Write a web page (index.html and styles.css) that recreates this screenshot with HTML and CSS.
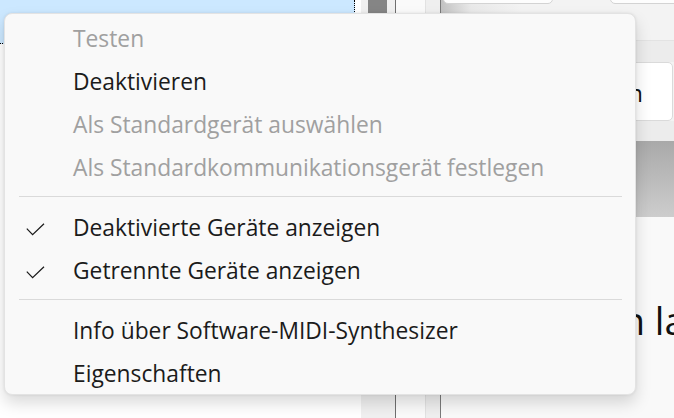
FILE: index.html
```html
<!DOCTYPE html>
<html lang="de">
<head>
<meta charset="utf-8">
<title>Kontextmenü</title>
<link rel="stylesheet" href="styles.css">
</head>
<body>
<div class="bg">
  <div class="files">
    <div class="row-sel"></div>
  </div>
  <div class="scroll"><div class="thumb"></div></div>
  <div class="gap1"></div>
  <div class="gap2"></div>
  <div class="preview">
    <div class="tools"><div class="tb tb1"></div><div class="tb tb2"></div></div>
    <div class="band"></div>
    <div class="box"><span class="cut">Öffnen</span></div>
    <div class="band2"></div>
    <div class="grad"></div>
    <div class="msg"><span class="cut2">Dateien</span><span class="rest">&nbsp;la</span></div>
  </div>
</div>

<div class="menu">
  <div class="item disabled"><span class="chk"></span><span class="lbl">Testen</span></div>
  <div class="item"><span class="chk"></span><span class="lbl">Deaktivieren</span></div>
  <div class="item disabled"><span class="chk"></span><span class="lbl">Als Standardgerät auswählen</span></div>
  <div class="item disabled"><span class="chk"></span><span class="lbl">Als Standardkommunikationsgerät festlegen</span></div>
  <div class="sep"></div>
  <div class="item"><span class="chk"><svg width="19" height="13" viewBox="0 0 19 13"><path d="M0.8 5.6 L6.6 11.6 L18 0.8" fill="none" stroke="#1b1b1b" stroke-width="1.25"/></svg></span><span class="lbl">Deaktivierte Geräte anzeigen</span></div>
  <div class="item"><span class="chk"><svg width="19" height="13" viewBox="0 0 19 13"><path d="M0.8 5.6 L6.6 11.6 L18 0.8" fill="none" stroke="#1b1b1b" stroke-width="1.25"/></svg></span><span class="lbl">Getrennte Geräte anzeigen</span></div>
  <div class="sep"></div>
  <div class="item"><span class="chk"></span><span class="lbl">Info über Software-MIDI-Synthesizer</span></div>
  <div class="item"><span class="chk"></span><span class="lbl">Eigenschaften</span></div>
</div>
</body>
</html>
```

FILE: styles.css
```css
* { box-sizing: border-box; }
html, body {
  margin: 0;
  padding: 0;
  width: 674px;
  height: 418px;
  overflow: hidden;
  background: #ffffff;
  font-family: "Open Sans", "Noto Sans", sans-serif;
}
.bg {
  display: flex;
  width: 674px;
  height: 418px;
}
.files {
  width: 361px;
  flex: none;
  background: #ffffff;
}
.row-sel {
  width: 355px;
  height: 44px;
  background: #cce8ff;
  border-right: 1px dotted #000;
  border-bottom: 1px dotted #000;
}
.scroll {
  width: 35px;
  flex: none;
  background: #f0f0f0;
  border-right: 1px solid #6f6f6f;
}
.thumb {
  width: 19px;
  height: 250px;
  margin-left: 7px;
  background: #858585;
}
.gap1 {
  width: 30px;
  flex: none;
  background: #fafafa;
  border-right: 1px solid #e2e2e2;
}
.gap2 {
  width: 15px;
  flex: none;
  background: #efefef;
  border-right: 1px solid #7a7a7a;
}
.preview {
  flex: 1;
  display: flex;
  flex-direction: column;
  overflow: hidden;
  background: linear-gradient(to right, #c2c2c2, #e9e9e9 30px, #f3f3f3 80px);
}
.tools {
  height: 41px;
  flex: none;
  display: flex;
  border-bottom: 1px solid #e3e3e3;
}
.tb {
  height: 24px;
  margin-top: -20px;
  background: #fdfdfd;
  border: 1px solid #d3d3d3;
  border-radius: 5px;
  flex: none;
}
.tb1 { margin-left: 2px; width: 110px; }
.tb2 { margin-left: 57px; width: 80px; }
.band {
  height: 21px;
  flex: none;
  background: #ececec;
}
.box {
  height: 59px;
  flex: none;
  margin: 0 1px 0 8px;
  background: #ffffff;
  border: 1px solid #dadada;
  border-radius: 5px;
  padding-top: 18px;
  font-size: 24px;
  line-height: 24px;
  color: #111;
  white-space: nowrap;
}
.cut {
  display: inline-block;
  width: 193px;
  text-align: right;
}
.band2 {
  height: 20px;
  flex: none;
  background: #ececec;
}
.grad {
  height: 76px;
  flex: none;
  background: linear-gradient(#a9a9a9, #cdcdcd);
}
.msg {
  flex: 1;
  background: #f9f9f9;
  padding: 84px 0 0 8px;
  font-size: 38px;
  line-height: 38px;
  color: #111;
  white-space: nowrap;
}
.cut2 {
  display: inline-block;
  width: 196px;
  text-align: right;
}

.menu {
  position: absolute;
  left: 4px;
  top: 13px;
  width: 632px;
  height: 382px;
  background: #f9f9f9;
  border: 1px solid #e3e3e3;
  border-radius: 8px;
  padding: 1px 0;
  box-shadow: 0 8px 16px rgba(0, 0, 0, 0.15), 0 0 3px rgba(0, 0, 0, 0.08);
  font-size: 22.8px;
  color: #1b1b1b;
}
.item {
  display: flex;
  align-items: flex-start;
  height: 43px;
  padding-top: 5px;
  line-height: 38px;
  white-space: nowrap;
}
.item.disabled { color: #a0a0a0; }
.chk {
  width: 68px;
  flex: none;
  height: 38px;
}
.chk svg {
  display: block;
  margin: 14px 0 0 21px;
}
.sep {
  height: 1px;
  margin: 9px 13px 7px 14px;
  background: #dadada;
}
```
